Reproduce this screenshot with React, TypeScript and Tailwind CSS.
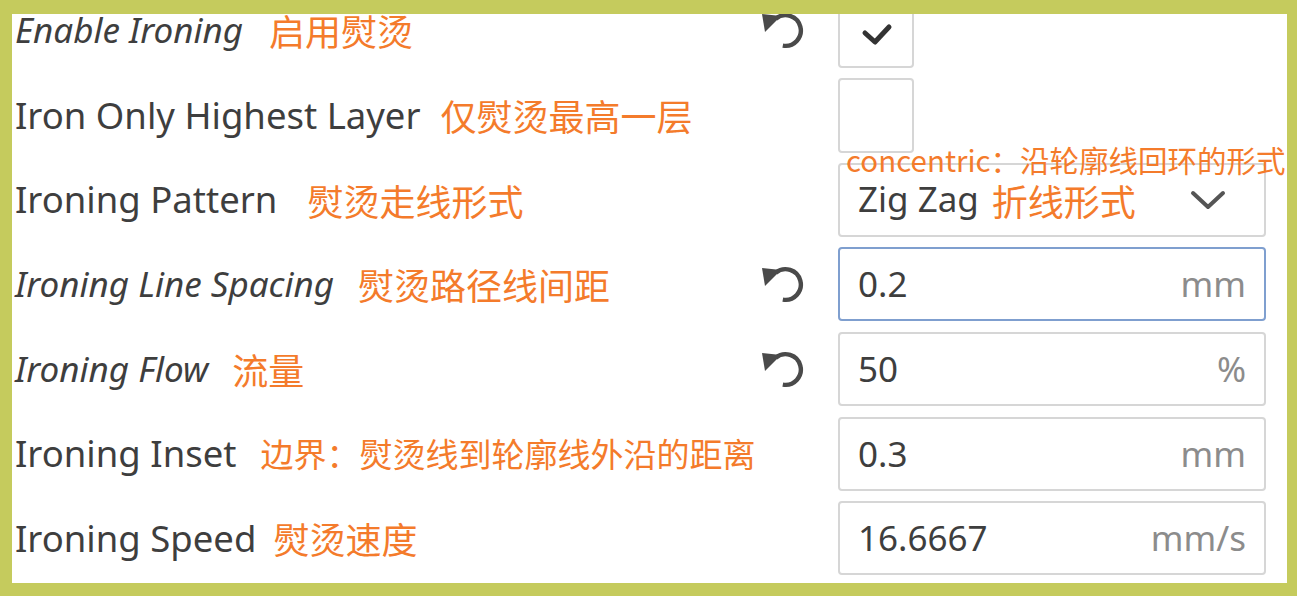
import React from "react";

const latin = { fontFamily: '"Noto Sans", "Open Sans", sans-serif' };
const cjk = { fontFamily: '"Noto Sans CJK SC", "Noto Sans", sans-serif' };

function ResetIcon() {
  return (
    <svg width="42" height="38" viewBox="0 0 42 38">
      <path
        d="M13.7 7.8 A15.3 15.3 0 1 1 20.8 34.6"
        fill="none"
        stroke="#4a4a4a"
        strokeWidth="4.4"
      />
      <polygon points="0,3 19,5 3,21" fill="#4a4a4a" />
    </svg>
  );
}

function Box({ children, focused }: { children?: React.ReactNode; focused?: boolean }) {
  return (
    <div
      className={
        "w-[428px] h-[74px] rounded-[4px] border-2 bg-white flex items-center pl-[18px] pr-[18px] " +
        (focused ? "border-[#7f9fcf]" : "border-[#d6d6d6]")
      }
    >
      {children}
    </div>
  );
}

function Row({
  label,
  italic,
  note,
  noteClass,
  reset,
  control,
}: {
  label: string;
  italic?: boolean;
  note: string;
  noteClass: string;
  reset?: boolean;
  control: React.ReactNode;
}) {
  return (
    <div className="flex items-center h-[84.7px] shrink-0">
      <div className="flex-1 flex items-center pl-[3px] whitespace-nowrap">
        <span
          className={"text-[#3e3e3e] " + (italic ? "italic text-[35px]" : "text-[36.5px]")}
          style={latin}
        >
          {label}
        </span>
        <span className={"text-[#f47b2b] " + noteClass} style={cjk}>
          {note}
        </span>
      </div>
      <div className="w-[42px] h-[38px] flex items-center justify-center">
        {reset ? <ResetIcon /> : null}
      </div>
      <div className="w-[428px] ml-[34px] mr-[21px] relative">{control}</div>
    </div>
  );
}

function NumberBox({ value, unit, focused }: { value: string; unit: string; focused?: boolean }) {
  return (
    <Box focused={focused}>
      <span className="text-[35px] text-[#3e3e3e] flex-1" style={latin}>
        {value}
      </span>
      <span className="text-[35px] text-[#8c8c8c]" style={latin}>
        {unit}
      </span>
    </Box>
  );
}

export default function App() {
  return (
    <div className="w-[1297px] h-[596px] bg-[#c5cb5d] pl-[12px] pt-[14px] pr-[10px] pb-[13px]">
      <div className="w-full h-full bg-white overflow-hidden">
        <div className="flex flex-col mt-[-26px]">
          <Row
            label="Enable Ironing"
            italic
            note="启用熨烫"
            noteClass="text-[36px] ml-[26px]"
            reset
            control={
              <div className="w-[76px] h-[75px] rounded-[4px] border-2 border-[#d6d6d6] bg-white flex items-center justify-center">
                <svg width="40" height="30" viewBox="0 0 40 30" className="mt-[8px]">
                  <polyline
                    points="9,14 19,23 33,8"
                    fill="none"
                    stroke="#333"
                    strokeWidth="5"
                    strokeLinecap="round"
                    strokeLinejoin="round"
                  />
                </svg>
              </div>
            }
          />
          <Row
            label="Iron Only Highest Layer"
            note="仅熨烫最高一层"
            noteClass="text-[36px] ml-[20px]"
            control={
              <div className="w-[76px] h-[75px] rounded-[4px] border-2 border-[#d6d6d6] bg-white" />
            }
          />
          <Row
            label="Ironing Pattern"
            note="熨烫走线形式"
            noteClass="text-[36px] ml-[30px]"
            control={
              <>
                <Box>
                  <span className="text-[35px] text-[#3e3e3e]" style={latin}>
                    Zig Zag
                  </span>
                  <span className="text-[36px] text-[#f47b2b] ml-[13px] flex-1" style={cjk}>
                    折线形式
                  </span>
                  <svg width="36" height="22" viewBox="0 0 36 22" className="mr-[20px]">
                    <polyline
                      points="3,4 18,18 33,4"
                      fill="none"
                      stroke="#555"
                      strokeWidth="4"
                      strokeLinecap="round"
                      strokeLinejoin="round"
                    />
                  </svg>
                </Box>
                <span
                  className="absolute left-[8px] top-[-18px] text-[29.5px] leading-none text-[#f47b2b] whitespace-nowrap"
                  style={cjk}
                >
                  concentric：沿轮廓线回环的形式
                </span>
              </>
            }
          />
          <Row
            label="Ironing Line Spacing"
            italic
            note="熨烫路径线间距"
            noteClass="text-[36px] ml-[24px]"
            reset
            control={<NumberBox value="0.2" unit="mm" focused />}
          />
          <Row
            label="Ironing Flow"
            italic
            note="流量"
            noteClass="text-[36px] ml-[24px]"
            reset
            control={<NumberBox value="50" unit="%" />}
          />
          <Row
            label="Ironing Inset"
            note="边界：熨烫线到轮廓线外沿的距离"
            noteClass="text-[33px] ml-[24px]"
            control={<NumberBox value="0.3" unit="mm" />}
          />
          <Row
            label="Ironing Speed"
            note="熨烫速度"
            noteClass="text-[36px] ml-[17px]"
            control={<NumberBox value="16.6667" unit="mm/s" />}
          />
        </div>
      </div>
    </div>
  );
}
